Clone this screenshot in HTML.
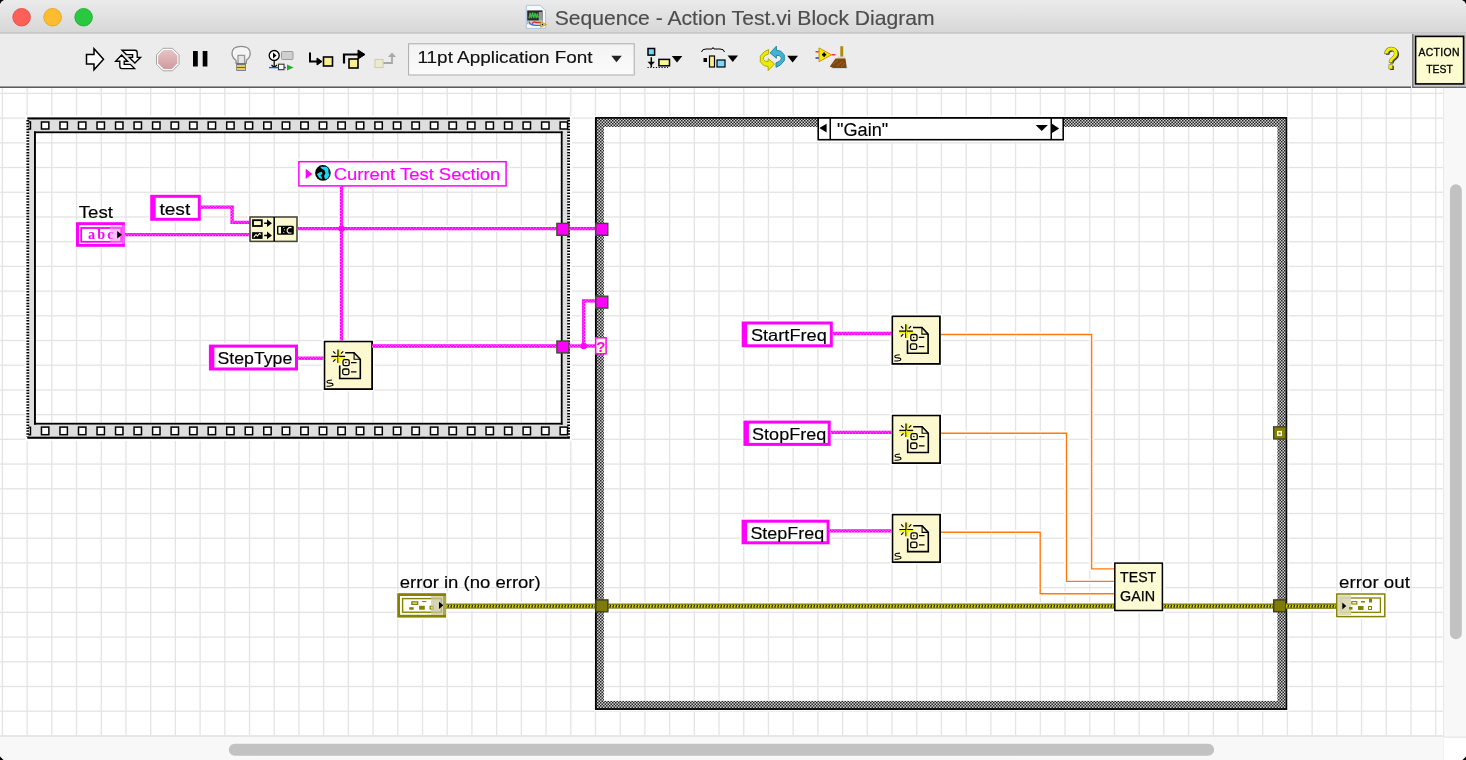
<!DOCTYPE html><html><head><meta charset="utf-8"><style>html,body{margin:0;padding:0;width:1466px;height:760px;overflow:hidden;background:#ececec;}svg{position:absolute;left:0;top:0;font-family:"Liberation Sans",sans-serif;will-change:transform;}</style></head><body>
<svg width="1466" height="760" viewBox="0 0 1466 760">
<defs><linearGradient id="tb" x1="0" y1="0" x2="0" y2="1"><stop offset="0" stop-color="#ebebeb"/><stop offset="1" stop-color="#d7d7d7"/></linearGradient><linearGradient id="dd" x1="0" y1="0" x2="0" y2="1"><stop offset="0" stop-color="#f3f3f3"/><stop offset="1" stop-color="#fbfbfb"/></linearGradient><symbol id="tsn" width="50" height="50" viewBox="0 0 50 50"><rect x="0.9" y="0.9" width="47.7" height="47.7" fill="#fcf9d0" stroke="#000" stroke-width="1.8"/><path d="M21.7,12.2 H30.6 L36.8,18.8 V38 H16.2 V25" fill="none" stroke="#000" stroke-width="1.6"/><path d="M30.6,12.2 V18.8 H36.8" fill="none" stroke="#000" stroke-width="1.1"/><rect x="19.5" y="19.2" width="6.2" height="6" rx="1.6" fill="none" stroke="#000" stroke-width="1.3"/><circle cx="22.4" cy="22.1" r="0.75" fill="#000"/><path d="M27.5,22.1 H33" stroke="#000" stroke-width="1.3"/><rect x="19.2" y="28.5" width="6.2" height="5.6" rx="1.5" fill="none" stroke="#000" stroke-width="1.3"/><path d="M27.5,31.3 H33" stroke="#000" stroke-width="1.3"/><path d="M7.8,17.2 H21.6 M15.9,9 V22.6" stroke="#f8f400" stroke-width="2.1"/><path d="M7.8,15.9 H21.6 M14.5,9 V22.6" stroke="#000" stroke-width="1.2"/><path d="M15.3,15.5 V22.6 M14.2,17.4 H21.6" stroke="#f4f000" stroke-width="0.9"/><path d="M9.6,10.8 L12,13.2 M19.8,10.8 L17.4,13.2 M9.6,21.2 L12,18.8" stroke="#000" stroke-width="1.2"/><path d="M8.5,39.5 Q3.5,39.5 3.5,41.2 Q3.5,42.6 6.5,42.6 Q9.5,42.6 9.5,44.2 Q9.5,45.7 3,45.7" fill="none" stroke="#000" stroke-width="1.1"/></symbol><pattern id="chk" patternUnits="userSpaceOnUse" width="3" height="3"><rect width="3" height="3" fill="#d0d0d0"/><rect width="1.5" height="1.5" fill="#262626"/><rect x="1.5" y="1.5" width="1.5" height="1.5" fill="#262626"/></pattern><pattern id="errp" patternUnits="userSpaceOnUse" x="0" y="604.7" width="3" height="2.9"><rect width="3" height="2.9" fill="#dedc00"/><path d="M0,2.9 L1.3,2.9 L2.4,0 L1.1,0 Z" fill="#151500"/></pattern><linearGradient id="abg" x1="0" y1="0" x2="0" y2="1"><stop offset="0" stop-color="#e7c3c6"/><stop offset="0.5" stop-color="#dcaeb2"/><stop offset="1" stop-color="#cf9ba0"/></linearGradient></defs>
<rect x="0" y="0" width="1466" height="33" fill="url(#tb)"/>
<rect x="0" y="32.6" width="1466" height="1.1" fill="#b2b2b2"/>
<path d="M0,0 H4 Q1,1 0,4 Z" fill="#000"/><path d="M1466,0 H1462 Q1465,1 1466,4 Z" fill="#000"/>
<circle cx="21.6" cy="17.2" r="8.8" fill="#fe5f57" stroke="#e2463f" stroke-width="0.8"/>
<circle cx="52.6" cy="17.2" r="8.8" fill="#febc2e" stroke="#e1a116" stroke-width="0.8"/>
<circle cx="83.6" cy="17.2" r="8.8" fill="#28c840" stroke="#1aab29" stroke-width="0.8"/>
<path d="M526.3,5.3 H540.3 L545.6,10.6 V28.4 H526.3 Z" fill="#f6f9fd" stroke="#a9bcd4" stroke-width="0.9"/><rect x="527.2" y="10.4" width="15.3" height="13.6" fill="#2a2a2a"/><path d="M529,18.5 L530.2,13 L531.4,18 L532.6,12.5 L533.8,18 L535,12.8 L536.2,18 L537.4,13.5 L538.3,18" stroke="#3cb846" stroke-width="1.3" fill="none"/><rect x="538.8" y="12" width="3.2" height="9" fill="#9a9a9a"/><rect x="527.2" y="20.5" width="15.3" height="4" fill="#d8d0c8"/><path d="M529,21.5 Q530,25.5 536,25.3 H541" stroke="#2a80c0" stroke-width="1.3" fill="none"/><path d="M532,23.5 Q534,21 536,22.5 L541,22.5" stroke="#e02a2a" stroke-width="1.5" fill="none"/><path d="M540.6,21.7 V27.3 L546.5,24.5 Z" fill="#f0c830" stroke="#9a8a20" stroke-width="0.6"/><circle cx="542.5" cy="24.5" r="0.7" fill="#000"/>
<text x="554.6999999999999" y="24.5" font-size="19.8" fill="#4d4d4d" font-weight="normal" text-anchor="start"  textLength="380.00" lengthAdjust="spacingAndGlyphs" stroke="#4d4d4d" stroke-width="0.15">Sequence - Action Test.vi Block Diagram</text>
<rect x="0" y="33.7" width="1466" height="53.5" fill="#ececec"/>
<rect x="0" y="86.5" width="1411" height="1.5" fill="#4a4a4a"/>
<rect x="1412.2" y="34" width="53.8" height="53.9" fill="#cacaca"/>
<rect x="1412.2" y="34" width="1.3" height="53.9" fill="#6a6a6a"/>
<rect x="1412.2" y="86.7" width="53.8" height="1.3" fill="#5a5a5a"/>
<path d="M86.5,54.5 H94 V48.8 L103.5,59.3 L94,69.8 V64.1 H86.5 Z" fill="#fff" stroke="#000" stroke-width="1.5" stroke-linejoin="miter"/>
<g transform="translate(112,45)" fill="#fff" stroke="#000" stroke-width="1.35" stroke-linejoin="miter"><path d="M10,5.2 L23,5.2 Q25.2,5.2 25.2,8 L25.2,12.3 L28.6,12.3 L22.9,18 L17.2,12.3 L20.6,12.3 L20.6,9.6 L14.4,9.6 Z"/><path d="M22.6,23.6 L10,23.6 Q7.8,23.6 7.8,21 L7.8,16.2 L3.6,16.2 L9.6,10 L15.6,16.2 L12.2,16.2 L12.2,19.3 L18.3,19.3 Z"/></g>
<path d="M163,48.3 H172.5 L179,54.8 V64.3 L172.5,70.8 H163 L156.5,64.3 V54.8 Z" fill="#fff" stroke="#9c9c9c" stroke-width="0.9"/><path d="M163.6,50 H171.9 L177.4,55.5 V63.6 L171.9,69.1 H163.6 L158.1,63.6 V55.5 Z" fill="url(#abg)"/>
<rect x="193" y="51" width="4.8" height="15.5" fill="#000"/><rect x="202.7" y="51" width="4.7" height="15.5" fill="#000"/>
<path d="M236,63.2 V60.5 L233.5,58 Q232,56 232,53.5 Q232,46.4 241.1,46.4 Q250.2,46.4 250.2,53.5 Q250.2,56 248.7,58 L246.3,60.5 V63.2 Z" fill="#f5f5f5" stroke="#8c8c8c" stroke-width="1.3"/><path d="M238,63 V55.3 H244.6 V63" fill="#e6e6e6" stroke="#999" stroke-width="1.3"/><rect x="236.3" y="63.2" width="9.6" height="7.6" fill="#666"/><rect x="237" y="64.8" width="8.2" height="2.2" fill="#e4cc5a"/><rect x="237" y="68" width="8.2" height="2" fill="#e4cc5a"/>
<circle cx="274.2" cy="55.5" r="5" fill="#fff" stroke="#000" stroke-width="1.3"/><path d="M273,52.5 L276.5,55.5 L273,58.5 Z" fill="#000"/><rect x="281.5" y="51.5" width="11.5" height="8" rx="1" fill="#cfcfcf" stroke="#9a9a9a" stroke-width="1"/><path d="M274.2,60.5 V67 M271.5,65 L274.2,67.5 L277,65" stroke="#000" stroke-width="1.2" fill="none"/><path d="M269,67.6 H286" stroke="#1a4cff" stroke-width="1.3"/><rect x="278.5" y="64.2" width="5.5" height="5.5" fill="#fff" stroke="#333" stroke-width="1.1"/><path d="M287,64.5 L293.5,67.6 L287,70.5 Z" fill="#20b020"/>
<path d="M310,52.5 V61.5 H318" fill="none" stroke="#000" stroke-width="2"/><path d="M317,58 L322,61.5 L317,65 Z" fill="#000" stroke="#000" stroke-width="1"/><rect x="323.5" y="57" width="9" height="9" fill="#f8f090" stroke="#000" stroke-width="1.6"/>
<path d="M344,63.5 V54.5 H359" fill="none" stroke="#000" stroke-width="2.2"/><path d="M358,50 L365,54.5 L358,59 Z" fill="#000" stroke="#000" stroke-width="1"/><rect x="349" y="59" width="9" height="9" fill="#f8f090" stroke="#000" stroke-width="1.6"/>
<rect x="375" y="59.5" width="8" height="8" fill="#ebebcf" stroke="#d0d0b8" stroke-width="1.2"/><path d="M383.5,63 H392 V56" stroke="#a8a8a8" stroke-width="1.8" fill="none"/><path d="M388,57 L392,52.5 L396,57 Z" fill="#a8a8a8"/>
<rect x="408.6" y="43.8" width="225.6" height="31.2" fill="url(#dd)" stroke="#acacac" stroke-width="1"/>
<text x="417.5" y="63.2" font-size="16.3" fill="#111" font-weight="normal" text-anchor="start"  textLength="175.10" lengthAdjust="spacingAndGlyphs" stroke="#111" stroke-width="0.15">11pt Application Font</text>
<path d="M611.3,55.8 H621.8 L616.5,62.2 Z" fill="#222"/>
<rect x="648" y="48.5" width="6.6" height="6.6" fill="#6fdcff" stroke="#000" stroke-width="1.5"/><path d="M651.3,57.3 V67" stroke="#000" stroke-width="1.5"/><path d="M647.5,61.8 H655 L651.3,65.5 Z" fill="#000"/><path d="M647.5,67.5 H668" stroke="#000" stroke-width="1.2" stroke-dasharray="1.2 1.6"/><rect x="658.9" y="59.4" width="10.6" height="6.4" fill="#f8f890" stroke="#000" stroke-width="1.5"/><path d="M671.8,56 H682.3 L677,62.5 Z" fill="#000"/>
<path d="M701.5,52 Q702,49 706,49 H712 L713,47.5 L714,49 H720 Q724,49 724.5,52" fill="none" stroke="#000" stroke-width="1"/><rect x="703.5" y="58" width="3.5" height="4" fill="#000"/><rect x="709.5" y="56" width="5" height="11" fill="#f8f090" stroke="#000" stroke-width="1.2"/><rect x="717" y="60" width="8" height="7" fill="#7fd7f7" stroke="#000" stroke-width="1.2"/><path d="M727.5,55.5 H738 L732.8,62 Z" fill="#000"/>
<path d="M768.6,49.5 L764.2,51.8 L760.3,56.2 V61.8 L763.8,65.6 L768.2,66.6 V70.6 L774.5,63.9 L768.2,58.6 V61.6 L765.4,61.2 L763.3,59.2 V57.8 L765.2,55.4 L768.6,54 Z" fill="#ecec00" stroke="#a8a400" stroke-width="0.9" stroke-linejoin="round"/>
<g transform="rotate(180 772.3 58.4)"><path d="M768.6,49.5 L764.2,51.8 L760.3,56.2 V61.8 L763.8,65.6 L768.2,66.6 V70.6 L774.5,63.9 L768.2,58.6 V61.6 L765.4,61.2 L763.3,59.2 V57.8 L765.2,55.4 L768.6,54 Z" fill="#40b4d4" stroke="#1c7e98" stroke-width="0.9" stroke-linejoin="round"/></g>
<path d="M787.3,55.8 H798 L792.6,62.4 Z" fill="#000"/>
<path d="M815.5,51.7 H819 M831.5,54.7 H835.5" stroke="#ff3030" stroke-width="1.6"/><path d="M815.5,58 H819" stroke="#2040ff" stroke-width="1.6"/><path d="M819,47.9 V61.8 L831.5,54.8 Z" fill="#f8e800" stroke="#c09000" stroke-width="0.9"/><path d="M822,54.6 H826.2 M824.1,52.5 V56.7" stroke="#000" stroke-width="1.8"/><path d="M832,68.5 L836.5,61 H846 L847.5,68.5 Z" fill="#9a9a9a" opacity="0.45"/><rect x="840.3" y="46.2" width="2.9" height="11" fill="#b8860b"/><rect x="837.5" y="56.5" width="7.5" height="2.6" fill="#dcd8c0"/><path d="M829.8,66.5 L835.5,58.6 H845.5 L846.6,68 H833 Z" fill="#7a4a10"/><path d="M833,64 L838,60 M837,66 L843,61 M841,67 L845,63" stroke="#c05a20" stroke-width="0.9"/>
<text x="1384.5" y="69.8" font-size="31" font-weight="bold" fill="#333" textLength="16" lengthAdjust="spacingAndGlyphs">?</text><text x="1383.2" y="68.8" font-size="31" font-weight="bold" fill="#f2f000" stroke="#6a6a30" stroke-width="0.5" textLength="16" lengthAdjust="spacingAndGlyphs">?</text>
<rect x="1415.6" y="36.4" width="48" height="47.5" fill="#fdfbd0" stroke="#000" stroke-width="1.6"/>
<text x="1418.3999999999999" y="55.7" font-size="10.4" fill="#000" font-weight="normal" text-anchor="start" stroke="#000" stroke-width="0.3" textLength="41.00" lengthAdjust="spacing">ACTION</text>
<text x="1426.1999999999998" y="72.8" font-size="10.4" fill="#000" font-weight="normal" text-anchor="start" stroke="#000" stroke-width="0.3" textLength="26.70" lengthAdjust="spacing">TEST</text>
<rect x="0" y="87.9" width="1443.5" height="648.5" fill="#fff"/>
<rect x="1.75" y="88" width="1.3" height="648" fill="#e4e4e4"/>
<rect x="26.46" y="88" width="1.3" height="648" fill="#e4e4e4"/>
<rect x="51.17" y="88" width="1.3" height="648" fill="#e4e4e4"/>
<rect x="75.89" y="88" width="1.3" height="648" fill="#e4e4e4"/>
<rect x="100.60" y="88" width="1.3" height="648" fill="#e4e4e4"/>
<rect x="125.31" y="88" width="1.3" height="648" fill="#e4e4e4"/>
<rect x="150.02" y="88" width="1.3" height="648" fill="#e4e4e4"/>
<rect x="174.73" y="88" width="1.3" height="648" fill="#e4e4e4"/>
<rect x="199.45" y="88" width="1.3" height="648" fill="#e4e4e4"/>
<rect x="224.16" y="88" width="1.3" height="648" fill="#e4e4e4"/>
<rect x="248.87" y="88" width="1.3" height="648" fill="#e4e4e4"/>
<rect x="273.58" y="88" width="1.3" height="648" fill="#e4e4e4"/>
<rect x="298.29" y="88" width="1.3" height="648" fill="#e4e4e4"/>
<rect x="323.01" y="88" width="1.3" height="648" fill="#e4e4e4"/>
<rect x="347.72" y="88" width="1.3" height="648" fill="#e4e4e4"/>
<rect x="372.43" y="88" width="1.3" height="648" fill="#e4e4e4"/>
<rect x="397.14" y="88" width="1.3" height="648" fill="#e4e4e4"/>
<rect x="421.85" y="88" width="1.3" height="648" fill="#e4e4e4"/>
<rect x="446.57" y="88" width="1.3" height="648" fill="#e4e4e4"/>
<rect x="471.28" y="88" width="1.3" height="648" fill="#e4e4e4"/>
<rect x="495.99" y="88" width="1.3" height="648" fill="#e4e4e4"/>
<rect x="520.70" y="88" width="1.3" height="648" fill="#e4e4e4"/>
<rect x="545.41" y="88" width="1.3" height="648" fill="#e4e4e4"/>
<rect x="570.13" y="88" width="1.3" height="648" fill="#e4e4e4"/>
<rect x="594.84" y="88" width="1.3" height="648" fill="#e4e4e4"/>
<rect x="619.55" y="88" width="1.3" height="648" fill="#e4e4e4"/>
<rect x="644.26" y="88" width="1.3" height="648" fill="#e4e4e4"/>
<rect x="668.97" y="88" width="1.3" height="648" fill="#e4e4e4"/>
<rect x="693.69" y="88" width="1.3" height="648" fill="#e4e4e4"/>
<rect x="718.40" y="88" width="1.3" height="648" fill="#e4e4e4"/>
<rect x="743.11" y="88" width="1.3" height="648" fill="#e4e4e4"/>
<rect x="767.82" y="88" width="1.3" height="648" fill="#e4e4e4"/>
<rect x="792.53" y="88" width="1.3" height="648" fill="#e4e4e4"/>
<rect x="817.25" y="88" width="1.3" height="648" fill="#e4e4e4"/>
<rect x="841.96" y="88" width="1.3" height="648" fill="#e4e4e4"/>
<rect x="866.67" y="88" width="1.3" height="648" fill="#e4e4e4"/>
<rect x="891.38" y="88" width="1.3" height="648" fill="#e4e4e4"/>
<rect x="916.09" y="88" width="1.3" height="648" fill="#e4e4e4"/>
<rect x="940.81" y="88" width="1.3" height="648" fill="#e4e4e4"/>
<rect x="965.52" y="88" width="1.3" height="648" fill="#e4e4e4"/>
<rect x="990.23" y="88" width="1.3" height="648" fill="#e4e4e4"/>
<rect x="1014.94" y="88" width="1.3" height="648" fill="#e4e4e4"/>
<rect x="1039.65" y="88" width="1.3" height="648" fill="#e4e4e4"/>
<rect x="1064.37" y="88" width="1.3" height="648" fill="#e4e4e4"/>
<rect x="1089.08" y="88" width="1.3" height="648" fill="#e4e4e4"/>
<rect x="1113.79" y="88" width="1.3" height="648" fill="#e4e4e4"/>
<rect x="1138.50" y="88" width="1.3" height="648" fill="#e4e4e4"/>
<rect x="1163.21" y="88" width="1.3" height="648" fill="#e4e4e4"/>
<rect x="1187.93" y="88" width="1.3" height="648" fill="#e4e4e4"/>
<rect x="1212.64" y="88" width="1.3" height="648" fill="#e4e4e4"/>
<rect x="1237.35" y="88" width="1.3" height="648" fill="#e4e4e4"/>
<rect x="1262.06" y="88" width="1.3" height="648" fill="#e4e4e4"/>
<rect x="1286.77" y="88" width="1.3" height="648" fill="#e4e4e4"/>
<rect x="1311.49" y="88" width="1.3" height="648" fill="#e4e4e4"/>
<rect x="1336.20" y="88" width="1.3" height="648" fill="#e4e4e4"/>
<rect x="1360.91" y="88" width="1.3" height="648" fill="#e4e4e4"/>
<rect x="1385.62" y="88" width="1.3" height="648" fill="#e4e4e4"/>
<rect x="1410.33" y="88" width="1.3" height="648" fill="#e4e4e4"/>
<rect x="1435.05" y="88" width="1.3" height="648" fill="#e4e4e4"/>
<rect x="0" y="92.75" width="1443" height="1.3" fill="#e4e4e4"/>
<rect x="0" y="117.46" width="1443" height="1.3" fill="#e4e4e4"/>
<rect x="0" y="142.17" width="1443" height="1.3" fill="#e4e4e4"/>
<rect x="0" y="166.89" width="1443" height="1.3" fill="#e4e4e4"/>
<rect x="0" y="191.60" width="1443" height="1.3" fill="#e4e4e4"/>
<rect x="0" y="216.31" width="1443" height="1.3" fill="#e4e4e4"/>
<rect x="0" y="241.02" width="1443" height="1.3" fill="#e4e4e4"/>
<rect x="0" y="265.73" width="1443" height="1.3" fill="#e4e4e4"/>
<rect x="0" y="290.45" width="1443" height="1.3" fill="#e4e4e4"/>
<rect x="0" y="315.16" width="1443" height="1.3" fill="#e4e4e4"/>
<rect x="0" y="339.87" width="1443" height="1.3" fill="#e4e4e4"/>
<rect x="0" y="364.58" width="1443" height="1.3" fill="#e4e4e4"/>
<rect x="0" y="389.29" width="1443" height="1.3" fill="#e4e4e4"/>
<rect x="0" y="414.01" width="1443" height="1.3" fill="#e4e4e4"/>
<rect x="0" y="438.72" width="1443" height="1.3" fill="#e4e4e4"/>
<rect x="0" y="463.43" width="1443" height="1.3" fill="#e4e4e4"/>
<rect x="0" y="488.14" width="1443" height="1.3" fill="#e4e4e4"/>
<rect x="0" y="512.85" width="1443" height="1.3" fill="#e4e4e4"/>
<rect x="0" y="537.57" width="1443" height="1.3" fill="#e4e4e4"/>
<rect x="0" y="562.28" width="1443" height="1.3" fill="#e4e4e4"/>
<rect x="0" y="586.99" width="1443" height="1.3" fill="#e4e4e4"/>
<rect x="0" y="611.70" width="1443" height="1.3" fill="#e4e4e4"/>
<rect x="0" y="636.41" width="1443" height="1.3" fill="#e4e4e4"/>
<rect x="0" y="661.13" width="1443" height="1.3" fill="#e4e4e4"/>
<rect x="0" y="685.84" width="1443" height="1.3" fill="#e4e4e4"/>
<rect x="0" y="710.55" width="1443" height="1.3" fill="#e4e4e4"/>
<rect x="0" y="735.26" width="1443" height="1.3" fill="#e4e4e4"/>
<rect x="26.8" y="117" width="543.6" height="322.3" fill="none" stroke="#fff" stroke-width="3"/><rect x="595.2" y="117.3" width="691.8" height="592.4" fill="none" stroke="#fff" stroke-width="3"/><rect x="74.40" y="220.60" width="52.10" height="27.80" fill="#fff"/><path d="M125,234.6 L249.5,234.6" fill="none" stroke="#fff" stroke-width="6.4"/><rect x="148.60" y="193.20" width="53.80" height="29.20" fill="#fff"/><path d="M201,207.1 L232.1,207.1 L232.1,222.4 L249.5,222.4" fill="none" stroke="#fff" stroke-width="6.4"/><rect x="247.70" y="215.10" width="51.60" height="28.60" fill="#fff"/><rect x="296.60" y="159.40" width="211.80" height="28.80" fill="#fff"/><path d="M341.5,186 L341.5,340.5" fill="none" stroke="#fff" stroke-width="6.4"/><path d="M297.5,228.6 L556.5,228.6" fill="none" stroke="#fff" stroke-width="6.4"/><rect x="207.30" y="343.00" width="92.30" height="29.10" fill="#fff"/><path d="M298,358.2 L323.5,358.2" fill="none" stroke="#fff" stroke-width="6.4"/><rect x="321.90" y="338.90" width="52.50" height="52.50" fill="#fff"/><path d="M372,346 L556.5,346" fill="none" stroke="#fff" stroke-width="6.4"/><rect x="554.60" y="221.10" width="16.70" height="16.50" fill="#fff"/><rect x="554.60" y="338.70" width="16.70" height="16.50" fill="#fff"/><rect x="593.50" y="221.10" width="16.60" height="16.50" fill="#fff"/><rect x="593.50" y="293.90" width="16.60" height="16.50" fill="#fff"/><rect x="593.40" y="335.40" width="15.10" height="20.80" fill="#fff"/><rect x="593.60" y="597.60" width="16.60" height="16.50" fill="#fff"/><rect x="1271.40" y="597.60" width="16.60" height="16.50" fill="#fff"/><rect x="1271.40" y="424.50" width="16.80" height="16.80" fill="#fff"/><rect x="1112.50" y="560.80" width="52.30" height="52.10" fill="#fff"/><rect x="395.60" y="591.60" width="52.10" height="27.60" fill="#fff"/><rect x="1334.40" y="591.60" width="52.70" height="27.40" fill="#fff"/><rect x="815.80" y="115.60" width="249.80" height="26.40" fill="#fff"/><path d="M569.5,228.6 L595.5,228.6" fill="none" stroke="#fff" stroke-width="6.4"/><path d="M569.5,346 L595.5,346" fill="none" stroke="#fff" stroke-width="6.4"/><path d="M583.7,346 L583.7,300.8 L595.5,300.8" fill="none" stroke="#fff" stroke-width="6.4"/><rect x="740.10" y="319.90" width="94.30" height="29.00" fill="#fff"/><rect x="741.80" y="419.00" width="90.50" height="28.50" fill="#fff"/><rect x="740.00" y="518.10" width="91.20" height="27.80" fill="#fff"/><path d="M833,333.5 L891.5,333.5" fill="none" stroke="#fff" stroke-width="6.4"/><path d="M831,432.4 L891.5,432.4" fill="none" stroke="#fff" stroke-width="6.4"/><path d="M830,530.9 L891.5,530.9" fill="none" stroke="#fff" stroke-width="6.4"/><rect x="889.70" y="313.70" width="52.50" height="52.50" fill="#fff"/><rect x="889.90" y="412.90" width="52.50" height="52.50" fill="#fff"/><rect x="889.90" y="512.00" width="52.50" height="52.50" fill="#fff"/><path d="M941,334.5 L1091.6,334.5 L1091.6,568.9 L1114.5,568.9" fill="none" stroke="#fff" stroke-width="4.6"/><path d="M941,433.2 L1066.5,433.2 L1066.5,581.4 L1114.5,581.4" fill="none" stroke="#fff" stroke-width="4.6"/><path d="M941,532.3 L1040.2,532.3 L1040.2,593.7 L1114.5,593.7" fill="none" stroke="#fff" stroke-width="4.6"/><rect x="446" y="601.9" width="890" height="8.4" fill="#fff"/><rect x="1286" y="601.9" width="51" height="8.4" fill="#fff"/>
<rect x="1443.5" y="87.9" width="22.5" height="648.5" fill="#f8f8f8"/>
<rect x="1443" y="87.9" width="1" height="648.5" fill="#e8e8e8"/>
<rect x="0" y="735.2" width="1443.9" height="2.3" fill="#e6e6e6"/>
<rect x="0" y="737" width="1443.5" height="23" fill="#f8f8f8"/>
<rect x="1443.9" y="738" width="22.1" height="22" fill="#fff"/>
<path d="M1466,756.5 V760 H1462.5 Z" fill="#000"/><path d="M0,756.5 V760 H3.5 Z" fill="#000"/>
<rect x="1450" y="184.3" width="11.8" height="455" rx="5.9" fill="#c2c2c2"/>
<rect x="228.8" y="743.8" width="985.3" height="12" rx="6" fill="#c2c2c2"/>
<rect x="28.5" y="119.4" width="540" height="12.1" fill="#dedede"/>
<rect x="28.5" y="424.6" width="540" height="12.2" fill="#dedede"/>
<rect x="28.5" y="119.4" width="6" height="317" fill="#dedede"/>
<rect x="562" y="119.4" width="6" height="317" fill="#dedede"/>
<rect x="27.3" y="117.4" width="542.6" height="2.1" fill="#000"/>
<rect x="27.3" y="436.7" width="542.6" height="2.1" fill="#000"/>
<rect x="34" y="131.4" width="528.6" height="1.8" fill="#000"/>
<rect x="34" y="422.8" width="528.6" height="1.8" fill="#000"/>
<rect x="34" y="131.4" width="1.9" height="293.2" fill="#000"/>
<rect x="560.8" y="131.4" width="1.8" height="293.2" fill="#000"/>
<path d="M27.8,120 V436.5" stroke="#000" stroke-width="2.8" stroke-dasharray="1.5 1.4"/>
<path d="M568.6,120 V436.5" stroke="#000" stroke-width="2.8" stroke-dasharray="1.5 1.4"/>
<rect x="41.45" y="122.0" width="7.40" height="7.0" fill="#fff" stroke="#000" stroke-width="1.5"/><rect x="41.45" y="427.1" width="7.40" height="7.6" fill="#fff" stroke="#000" stroke-width="1.5"/><rect x="59.98" y="122.0" width="7.40" height="7.0" fill="#fff" stroke="#000" stroke-width="1.5"/><rect x="59.98" y="427.1" width="7.40" height="7.6" fill="#fff" stroke="#000" stroke-width="1.5"/><rect x="78.50" y="122.0" width="7.40" height="7.0" fill="#fff" stroke="#000" stroke-width="1.5"/><rect x="78.50" y="427.1" width="7.40" height="7.6" fill="#fff" stroke="#000" stroke-width="1.5"/><rect x="97.03" y="122.0" width="7.40" height="7.0" fill="#fff" stroke="#000" stroke-width="1.5"/><rect x="97.03" y="427.1" width="7.40" height="7.6" fill="#fff" stroke="#000" stroke-width="1.5"/><rect x="115.55" y="122.0" width="7.40" height="7.0" fill="#fff" stroke="#000" stroke-width="1.5"/><rect x="115.55" y="427.1" width="7.40" height="7.6" fill="#fff" stroke="#000" stroke-width="1.5"/><rect x="134.07" y="122.0" width="7.40" height="7.0" fill="#fff" stroke="#000" stroke-width="1.5"/><rect x="134.07" y="427.1" width="7.40" height="7.6" fill="#fff" stroke="#000" stroke-width="1.5"/><rect x="152.60" y="122.0" width="7.40" height="7.0" fill="#fff" stroke="#000" stroke-width="1.5"/><rect x="152.60" y="427.1" width="7.40" height="7.6" fill="#fff" stroke="#000" stroke-width="1.5"/><rect x="171.12" y="122.0" width="7.40" height="7.0" fill="#fff" stroke="#000" stroke-width="1.5"/><rect x="171.12" y="427.1" width="7.40" height="7.6" fill="#fff" stroke="#000" stroke-width="1.5"/><rect x="189.65" y="122.0" width="7.40" height="7.0" fill="#fff" stroke="#000" stroke-width="1.5"/><rect x="189.65" y="427.1" width="7.40" height="7.6" fill="#fff" stroke="#000" stroke-width="1.5"/><rect x="208.18" y="122.0" width="7.40" height="7.0" fill="#fff" stroke="#000" stroke-width="1.5"/><rect x="208.18" y="427.1" width="7.40" height="7.6" fill="#fff" stroke="#000" stroke-width="1.5"/><rect x="226.70" y="122.0" width="7.40" height="7.0" fill="#fff" stroke="#000" stroke-width="1.5"/><rect x="226.70" y="427.1" width="7.40" height="7.6" fill="#fff" stroke="#000" stroke-width="1.5"/><rect x="245.22" y="122.0" width="7.40" height="7.0" fill="#fff" stroke="#000" stroke-width="1.5"/><rect x="245.22" y="427.1" width="7.40" height="7.6" fill="#fff" stroke="#000" stroke-width="1.5"/><rect x="263.75" y="122.0" width="7.40" height="7.0" fill="#fff" stroke="#000" stroke-width="1.5"/><rect x="263.75" y="427.1" width="7.40" height="7.6" fill="#fff" stroke="#000" stroke-width="1.5"/><rect x="282.27" y="122.0" width="7.40" height="7.0" fill="#fff" stroke="#000" stroke-width="1.5"/><rect x="282.27" y="427.1" width="7.40" height="7.6" fill="#fff" stroke="#000" stroke-width="1.5"/><rect x="300.80" y="122.0" width="7.40" height="7.0" fill="#fff" stroke="#000" stroke-width="1.5"/><rect x="300.80" y="427.1" width="7.40" height="7.6" fill="#fff" stroke="#000" stroke-width="1.5"/><rect x="319.32" y="122.0" width="7.40" height="7.0" fill="#fff" stroke="#000" stroke-width="1.5"/><rect x="319.32" y="427.1" width="7.40" height="7.6" fill="#fff" stroke="#000" stroke-width="1.5"/><rect x="337.85" y="122.0" width="7.40" height="7.0" fill="#fff" stroke="#000" stroke-width="1.5"/><rect x="337.85" y="427.1" width="7.40" height="7.6" fill="#fff" stroke="#000" stroke-width="1.5"/><rect x="356.37" y="122.0" width="7.40" height="7.0" fill="#fff" stroke="#000" stroke-width="1.5"/><rect x="356.37" y="427.1" width="7.40" height="7.6" fill="#fff" stroke="#000" stroke-width="1.5"/><rect x="374.90" y="122.0" width="7.40" height="7.0" fill="#fff" stroke="#000" stroke-width="1.5"/><rect x="374.90" y="427.1" width="7.40" height="7.6" fill="#fff" stroke="#000" stroke-width="1.5"/><rect x="393.42" y="122.0" width="7.40" height="7.0" fill="#fff" stroke="#000" stroke-width="1.5"/><rect x="393.42" y="427.1" width="7.40" height="7.6" fill="#fff" stroke="#000" stroke-width="1.5"/><rect x="411.95" y="122.0" width="7.40" height="7.0" fill="#fff" stroke="#000" stroke-width="1.5"/><rect x="411.95" y="427.1" width="7.40" height="7.6" fill="#fff" stroke="#000" stroke-width="1.5"/><rect x="430.47" y="122.0" width="7.40" height="7.0" fill="#fff" stroke="#000" stroke-width="1.5"/><rect x="430.47" y="427.1" width="7.40" height="7.6" fill="#fff" stroke="#000" stroke-width="1.5"/><rect x="449.00" y="122.0" width="7.40" height="7.0" fill="#fff" stroke="#000" stroke-width="1.5"/><rect x="449.00" y="427.1" width="7.40" height="7.6" fill="#fff" stroke="#000" stroke-width="1.5"/><rect x="467.52" y="122.0" width="7.40" height="7.0" fill="#fff" stroke="#000" stroke-width="1.5"/><rect x="467.52" y="427.1" width="7.40" height="7.6" fill="#fff" stroke="#000" stroke-width="1.5"/><rect x="486.05" y="122.0" width="7.40" height="7.0" fill="#fff" stroke="#000" stroke-width="1.5"/><rect x="486.05" y="427.1" width="7.40" height="7.6" fill="#fff" stroke="#000" stroke-width="1.5"/><rect x="504.57" y="122.0" width="7.40" height="7.0" fill="#fff" stroke="#000" stroke-width="1.5"/><rect x="504.57" y="427.1" width="7.40" height="7.6" fill="#fff" stroke="#000" stroke-width="1.5"/><rect x="523.10" y="122.0" width="7.40" height="7.0" fill="#fff" stroke="#000" stroke-width="1.5"/><rect x="523.10" y="427.1" width="7.40" height="7.6" fill="#fff" stroke="#000" stroke-width="1.5"/><rect x="541.62" y="122.0" width="7.40" height="7.0" fill="#fff" stroke="#000" stroke-width="1.5"/><rect x="541.62" y="427.1" width="7.40" height="7.6" fill="#fff" stroke="#000" stroke-width="1.5"/><rect x="560.15" y="122.0" width="7.40" height="7.0" fill="#fff" stroke="#000" stroke-width="1.5"/><rect x="560.15" y="427.1" width="7.40" height="7.6" fill="#fff" stroke="#000" stroke-width="1.5"/>
<path d="M28.5,122 H30.5 V129 H28.5" fill="none" stroke="#000" stroke-width="1.4"/>
<path d="M28.5,427.1 H30.5 V434.7 H28.5" fill="none" stroke="#000" stroke-width="1.4"/>
<rect x="599.9" y="122.9" width="681.5" height="582" fill="none" stroke="url(#chk)" stroke-width="8"/>
<rect x="595.8" y="117.9" width="690.4" height="791.1" fill="none" stroke="none"/>
<rect x="595.8" y="117.9" width="690.5" height="791.8" fill="none"/>
<rect x="595.85" y="117.95" width="690.5" height="591.1" fill="none" stroke="#000" stroke-width="1.8"/>
<rect x="818.2" y="118" width="245" height="21.7" fill="#fff" stroke="#000" stroke-width="1.6"/>
<rect x="829.5" y="118" width="1.5" height="21.7" fill="#000"/><rect x="1050.5" y="118" width="1.5" height="21.7" fill="#000"/>
<path d="M826.6,123.8 V132.4 L819.3,128.1 Z" fill="#000"/><path d="M1052,123.8 V133 L1059.2,128.4 Z" fill="#000"/>
<path d="M1035.6,125 H1047.9 L1041.7,130.9 Z" fill="#000"/>
<text x="837.0" y="136.1" font-size="18" fill="#000" font-weight="normal" text-anchor="start"  textLength="51.20" lengthAdjust="spacingAndGlyphs" stroke="#000" stroke-width="0.15">"Gain"</text>
<text x="78.69999999999999" y="217.7" font-size="16.5" fill="#000" font-weight="normal" text-anchor="start"  textLength="34.20" lengthAdjust="spacingAndGlyphs" stroke="#000" stroke-width="0.15">Test</text>
<rect x="76" y="222.2" width="48.9" height="24.6" fill="#ff00ff"/><rect x="79" y="225.1" width="43" height="18.8" fill="#fff"/><rect x="81.2" y="228" width="39.9" height="13.8" fill="none" stroke="#ff00ff" stroke-width="1.8"/><text x="88" y="239.4" font-size="14.2" font-weight="bold" font-family="Liberation Serif" fill="#ff00ff" textLength="25.5" lengthAdjust="spacing">abc</text><rect x="109.9" y="225.9" width="12.3" height="18.2" fill="#ff88ff" opacity="0.55"/><rect x="122.2" y="225.1" width="2.7" height="18.8" fill="#ff60ff"/><path d="M117.2,231 V238.6 L122,234.8 Z" fill="#000"/>
<path d="M125,234.6 L249.5,234.6" fill="none" stroke="#ff00ff" stroke-width="3.3"/><path d="M125.00,235.25 L249.50,235.25" stroke="#ffa0ff" stroke-width="0.9" stroke-dasharray="1 2" stroke-dashoffset="0"/><path d="M125.00,233.95 L249.50,233.95" stroke="#ffa0ff" stroke-width="0.9" stroke-dasharray="1 2" stroke-dashoffset="1.5"/>
<rect x="150.2" y="194.8" width="50.60000000000002" height="26.0" fill="#ff00ff"/><rect x="155.7" y="197.8" width="42.10000000000002" height="20.0" fill="#fff"/><text x="159.4" y="214.6" font-size="16.5" fill="#000" font-weight="normal" text-anchor="start"  textLength="30.90" lengthAdjust="spacingAndGlyphs" stroke="#000" stroke-width="0.15">test</text>
<path d="M201,207.1 L232.1,207.1 L232.1,222.4 L249.5,222.4" fill="none" stroke="#ff00ff" stroke-width="3.3"/><path d="M201.00,207.75 L232.10,207.75" stroke="#ffa0ff" stroke-width="0.9" stroke-dasharray="1 2" stroke-dashoffset="0"/><path d="M201.00,206.45 L232.10,206.45" stroke="#ffa0ff" stroke-width="0.9" stroke-dasharray="1 2" stroke-dashoffset="1.5"/><path d="M231.45,207.10 L231.45,222.40" stroke="#ffa0ff" stroke-width="0.9" stroke-dasharray="1 2" stroke-dashoffset="0"/><path d="M232.75,207.10 L232.75,222.40" stroke="#ffa0ff" stroke-width="0.9" stroke-dasharray="1 2" stroke-dashoffset="1.5"/><path d="M232.10,223.05 L249.50,223.05" stroke="#ffa0ff" stroke-width="0.9" stroke-dasharray="1 2" stroke-dashoffset="0"/><path d="M232.10,221.75 L249.50,221.75" stroke="#ffa0ff" stroke-width="0.9" stroke-dasharray="1 2" stroke-dashoffset="1.5"/>
<rect x="250" y="217" width="47" height="24.4" fill="#fcf9d0" stroke="#48483a" stroke-width="1.6"/><rect x="273.4" y="217" width="1.6" height="24.4" fill="#000"/><rect x="253" y="220.2" width="8.8" height="5.8" fill="none" stroke="#000" stroke-width="1.8"/><rect x="252.1" y="232.2" width="10.5" height="6.7" fill="#000"/><path d="M253.8,237.3 L256,234.5 L257.5,236 L259.5,233.5 L261,234.5" stroke="#fcf9d0" stroke-width="1.1" fill="none"/><path d="M264.2,223.3 H268 M264.2,235.5 H268" stroke="#000" stroke-width="1.4"/><path d="M267,219.3 L271.9,223.3 L267,227 Z M267,231.6 L271.9,235.5 L267,239.3 Z" fill="#000"/><rect x="277" y="225.8" width="16.8" height="8.9" rx="1.2" fill="#000"/><rect x="278.4" y="226.9" width="2.6" height="6.6" fill="#fcf9d0"/><circle cx="283.8" cy="227.5" r="0.6" fill="#fcf9d0"/><circle cx="284.5" cy="229.8" r="0.6" fill="#fcf9d0"/><circle cx="283.8" cy="232.3" r="0.6" fill="#fcf9d0"/><path d="M291.5,227.6 H289 L287.2,229.5 V231.5 L288.6,233 H291.5" stroke="#fcf9d0" stroke-width="1.1" fill="none"/>
<rect x="298.9" y="161.7" width="207.2" height="24.2" fill="#fff" stroke="#ff00ff" stroke-width="1.5"/><path d="M305.7,168.8 V179 L312.3,173.9 Z" fill="#ff00ff"/><circle cx="322.9" cy="172.9" r="7.8" fill="#000"/><path d="M320,166.8 H326.5 L328.5,169 V172 L329.3,175.5 L327.5,178.5 L325,179.3 L324,176 L325.5,173 L324.3,170 L322,169 Z" fill="#18d8f0"/><path d="M316.8,174 L319.5,172.6 L321.8,171.8 L322.5,173.8 L320.5,175.5 L322,177.5 L322.3,179.3 L319.3,178 Z" fill="#18d8f0"/>
<text x="333.8" y="180.3" font-size="16.5" fill="#ff00ff" font-weight="normal" text-anchor="start"  textLength="166.50" lengthAdjust="spacingAndGlyphs" stroke="#ff00ff" stroke-width="0.15">Current Test Section</text>
<path d="M341.5,186 L341.5,340.5" fill="none" stroke="#ff00ff" stroke-width="3.3"/><path d="M340.85,186.00 L340.85,340.50" stroke="#ffa0ff" stroke-width="0.9" stroke-dasharray="1 2" stroke-dashoffset="0"/><path d="M342.15,186.00 L342.15,340.50" stroke="#ffa0ff" stroke-width="0.9" stroke-dasharray="1 2" stroke-dashoffset="1.5"/>
<path d="M297.5,228.6 L556.5,228.6" fill="none" stroke="#ff00ff" stroke-width="3.3"/><path d="M297.50,229.25 L556.50,229.25" stroke="#ffa0ff" stroke-width="0.9" stroke-dasharray="1 2" stroke-dashoffset="0"/><path d="M297.50,227.95 L556.50,227.95" stroke="#ffa0ff" stroke-width="0.9" stroke-dasharray="1 2" stroke-dashoffset="1.5"/>
<circle cx="341.5" cy="228.6" r="3.2" fill="#ff00ff"/>
<rect x="208.9" y="344.6" width="89.1" height="25.899999999999977" fill="#ff00ff"/><rect x="214.4" y="347.6" width="80.6" height="19.899999999999977" fill="#fff"/><text x="217.5" y="364.3" font-size="16.5" fill="#000" font-weight="normal" text-anchor="start"  textLength="74.80" lengthAdjust="spacingAndGlyphs" stroke="#000" stroke-width="0.15">StepType</text>
<path d="M298,358.2 L323.5,358.2" fill="none" stroke="#ff00ff" stroke-width="3.3"/><path d="M298.00,358.85 L323.50,358.85" stroke="#ffa0ff" stroke-width="0.9" stroke-dasharray="1 2" stroke-dashoffset="0"/><path d="M298.00,357.55 L323.50,357.55" stroke="#ffa0ff" stroke-width="0.9" stroke-dasharray="1 2" stroke-dashoffset="1.5"/>
<use href="#tsn" x="323.5" y="340.5"/>
<path d="M372,346 L556.5,346" fill="none" stroke="#ff00ff" stroke-width="3.3"/><path d="M372.00,346.65 L556.50,346.65" stroke="#ffa0ff" stroke-width="0.9" stroke-dasharray="1 2" stroke-dashoffset="0"/><path d="M372.00,345.35 L556.50,345.35" stroke="#ffa0ff" stroke-width="0.9" stroke-dasharray="1 2" stroke-dashoffset="1.5"/>
<rect x="556.9" y="223.4" width="12.1" height="11.9" fill="#ff00ff" stroke="#3d4a2e" stroke-width="1.4"/>
<rect x="556.9" y="341" width="12.1" height="11.9" fill="#ff00ff" stroke="#3d4a2e" stroke-width="1.4"/>
<path d="M569.5,228.6 L595.5,228.6" fill="none" stroke="#ff00ff" stroke-width="3.3"/><path d="M569.50,229.25 L595.50,229.25" stroke="#ffa0ff" stroke-width="0.9" stroke-dasharray="1 2" stroke-dashoffset="0"/><path d="M569.50,227.95 L595.50,227.95" stroke="#ffa0ff" stroke-width="0.9" stroke-dasharray="1 2" stroke-dashoffset="1.5"/>
<path d="M569.5,346 L595.5,346" fill="none" stroke="#ff00ff" stroke-width="3.3"/><path d="M569.50,346.65 L595.50,346.65" stroke="#ffa0ff" stroke-width="0.9" stroke-dasharray="1 2" stroke-dashoffset="0"/><path d="M569.50,345.35 L595.50,345.35" stroke="#ffa0ff" stroke-width="0.9" stroke-dasharray="1 2" stroke-dashoffset="1.5"/>
<path d="M583.7,346 L583.7,300.8 L595.5,300.8" fill="none" stroke="#ff00ff" stroke-width="3.3"/><path d="M584.35,346.00 L584.35,300.80" stroke="#ffa0ff" stroke-width="0.9" stroke-dasharray="1 2" stroke-dashoffset="0"/><path d="M583.05,346.00 L583.05,300.80" stroke="#ffa0ff" stroke-width="0.9" stroke-dasharray="1 2" stroke-dashoffset="1.5"/><path d="M583.70,301.45 L595.50,301.45" stroke="#ffa0ff" stroke-width="0.9" stroke-dasharray="1 2" stroke-dashoffset="0"/><path d="M583.70,300.15 L595.50,300.15" stroke="#ffa0ff" stroke-width="0.9" stroke-dasharray="1 2" stroke-dashoffset="1.5"/>
<circle cx="583.7" cy="346" r="3.2" fill="#ff00ff"/>
<rect x="595.8" y="223.4" width="12" height="11.9" fill="#ff00ff" stroke="#3d4a2e" stroke-width="1.4"/>
<rect x="595.8" y="296.2" width="12" height="11.9" fill="#ff00ff" stroke="#3d4a2e" stroke-width="1.4"/>
<rect x="595.7" y="337.8" width="10.4" height="16" fill="#fcf9d0" stroke="#ff00ff" stroke-width="1.5"/><text x="600.9" y="352" font-size="15" font-weight="bold" fill="#ff00ff" text-anchor="middle">?</text>
<rect x="741.7" y="321.5" width="91.09999999999991" height="25.80000000000001" fill="#ff00ff"/><rect x="747.2" y="324.5" width="82.59999999999991" height="19.80000000000001" fill="#fff"/><text x="750.9" y="341" font-size="16.5" fill="#000" font-weight="normal" text-anchor="start"  textLength="76.00" lengthAdjust="spacingAndGlyphs" stroke="#000" stroke-width="0.15">StartFreq</text>
<rect x="743.4" y="420.6" width="87.30000000000007" height="25.299999999999955" fill="#ff00ff"/><rect x="748.9" y="423.6" width="78.80000000000007" height="19.299999999999955" fill="#fff"/><text x="752.1" y="439.9" font-size="16.5" fill="#000" font-weight="normal" text-anchor="start"  textLength="74.10" lengthAdjust="spacingAndGlyphs" stroke="#000" stroke-width="0.15">StopFreq</text>
<rect x="741.6" y="519.7" width="88.0" height="24.59999999999991" fill="#ff00ff"/><rect x="747.1" y="522.7" width="79.5" height="18.59999999999991" fill="#fff"/><text x="750.4" y="538.6" font-size="16.5" fill="#000" font-weight="normal" text-anchor="start"  textLength="73.80" lengthAdjust="spacingAndGlyphs" stroke="#000" stroke-width="0.15">StepFreq</text>
<path d="M833,333.5 L891.5,333.5" fill="none" stroke="#ff00ff" stroke-width="3.3"/><path d="M833.00,334.15 L891.50,334.15" stroke="#ffa0ff" stroke-width="0.9" stroke-dasharray="1 2" stroke-dashoffset="0"/><path d="M833.00,332.85 L891.50,332.85" stroke="#ffa0ff" stroke-width="0.9" stroke-dasharray="1 2" stroke-dashoffset="1.5"/>
<path d="M831,432.4 L891.5,432.4" fill="none" stroke="#ff00ff" stroke-width="3.3"/><path d="M831.00,433.05 L891.50,433.05" stroke="#ffa0ff" stroke-width="0.9" stroke-dasharray="1 2" stroke-dashoffset="0"/><path d="M831.00,431.75 L891.50,431.75" stroke="#ffa0ff" stroke-width="0.9" stroke-dasharray="1 2" stroke-dashoffset="1.5"/>
<path d="M830,530.9 L891.5,530.9" fill="none" stroke="#ff00ff" stroke-width="3.3"/><path d="M830.00,531.55 L891.50,531.55" stroke="#ffa0ff" stroke-width="0.9" stroke-dasharray="1 2" stroke-dashoffset="0"/><path d="M830.00,530.25 L891.50,530.25" stroke="#ffa0ff" stroke-width="0.9" stroke-dasharray="1 2" stroke-dashoffset="1.5"/>
<use href="#tsn" x="891.3" y="315.3"/>
<use href="#tsn" x="891.5" y="414.5"/>
<use href="#tsn" x="891.5" y="513.6"/>
<path d="M941,334.5 L1091.6,334.5 L1091.6,568.9 L1114.5,568.9" fill="none" stroke="#ff7a10" stroke-width="1.4"/>
<path d="M941,433.2 L1066.5,433.2 L1066.5,581.4 L1114.5,581.4" fill="none" stroke="#ff7a10" stroke-width="1.4"/>
<path d="M941,532.3 L1040.2,532.3 L1040.2,593.7 L1114.5,593.7" fill="none" stroke="#ff7a10" stroke-width="1.4"/>
<rect x="446" y="603.5" width="890" height="5.2" fill="#86841a"/><rect x="446" y="604.7" width="890" height="2.9" fill="url(#errp)"/>
<rect x="1114.8" y="563.1" width="47.6" height="47.4" fill="#fdfbd4" stroke="#000" stroke-width="1.5"/>
<text x="1120.1" y="582.2" font-size="14.2" fill="#000" font-weight="normal" text-anchor="start" stroke="#000" stroke-width="0.25" textLength="36.10" lengthAdjust="spacingAndGlyphs">TEST</text>
<text x="1120.1" y="600.6" font-size="14.2" fill="#000" font-weight="normal" text-anchor="start" stroke="#000" stroke-width="0.25" textLength="35.10" lengthAdjust="spacingAndGlyphs">GAIN</text>
<rect x="595.9" y="599.9" width="12" height="11.9" fill="#7f7b0a" stroke="#3d3d2a" stroke-width="1.4"/>
<rect x="1273.7" y="599.9" width="12" height="11.9" fill="#7f7b0a" stroke="#3d3d2a" stroke-width="1.4"/>
<rect x="1273.7" y="426.8" width="12.2" height="12.2" fill="#858000" stroke="#3d3d2a" stroke-width="1.3"/><rect x="1277" y="430.9" width="5" height="5" fill="#fff"/><circle cx="1279.6" cy="433.4" r="1.2" fill="#858000"/>
<text x="399.8" y="588.2" font-size="16.5" fill="#000" font-weight="normal" text-anchor="start"  textLength="140.90" lengthAdjust="spacingAndGlyphs" stroke="#000" stroke-width="0.15">error in (no error)</text>
<rect x="397.2" y="593.2" width="48.9" height="24.4" fill="#858200"/><rect x="400" y="596" width="43.3" height="18.8" fill="#fff"/><rect x="402.6" y="598.6" width="38.7" height="13.6" fill="none" stroke="#858200" stroke-width="1.4"/><rect x="411.9" y="601.9" width="5.7" height="2.4" fill="none" stroke="#858200" stroke-width="1.4"/><rect x="422" y="601" width="4.4" height="1.1" fill="#858200"/><rect x="409.2" y="607.2" width="4.5" height="2.5" fill="#858200"/><rect x="419.1" y="605.8" width="5.7" height="3.9" fill="#858200"/><rect x="430.2" y="606.3" width="3" height="2.7" fill="none" stroke="#858200" stroke-width="1.3"/><rect x="431.1" y="596" width="12.2" height="18.8" fill="#c8c69a" opacity="0.75"/><rect x="443.3" y="596" width="2.8" height="18.8" fill="#a8a650"/><path d="M439,601.8 V608.9 L443.3,605.3 Z" fill="#000"/>
<rect x="1286" y="603.5" width="51" height="5.2" fill="#86841a"/><rect x="1286" y="604.7" width="51" height="2.9" fill="url(#errp)"/>
<text x="1339.1" y="587.8" font-size="16.5" fill="#000" font-weight="normal" text-anchor="start"  textLength="70.80" lengthAdjust="spacingAndGlyphs" stroke="#000" stroke-width="0.15">error out</text>
<rect x="1336.8" y="594" width="48" height="22.6" fill="#fff" stroke="#858200" stroke-width="1.5"/><rect x="1341" y="598" width="39.4" height="14.3" fill="none" stroke="#858200" stroke-width="1.3"/><rect x="1338" y="595.2" width="13" height="20" fill="#d8d6b0" opacity="0.9"/><path d="M1342.3,602.5 V609.5 L1346.3,606 Z" fill="#000"/><rect x="1351.8" y="601.6" width="5" height="2.4" fill="none" stroke="#858200" stroke-width="1.1"/><rect x="1361" y="601" width="4" height="1.5" fill="#858200"/><rect x="1369" y="598.5" width="3" height="4" fill="#858200"/><rect x="1349" y="607" width="3.5" height="2.5" fill="#858200"/><rect x="1358" y="606" width="5.5" height="4" fill="#858200"/><rect x="1368.5" y="606.5" width="3" height="3" fill="none" stroke="#858200" stroke-width="1"/>
</svg></body></html>
